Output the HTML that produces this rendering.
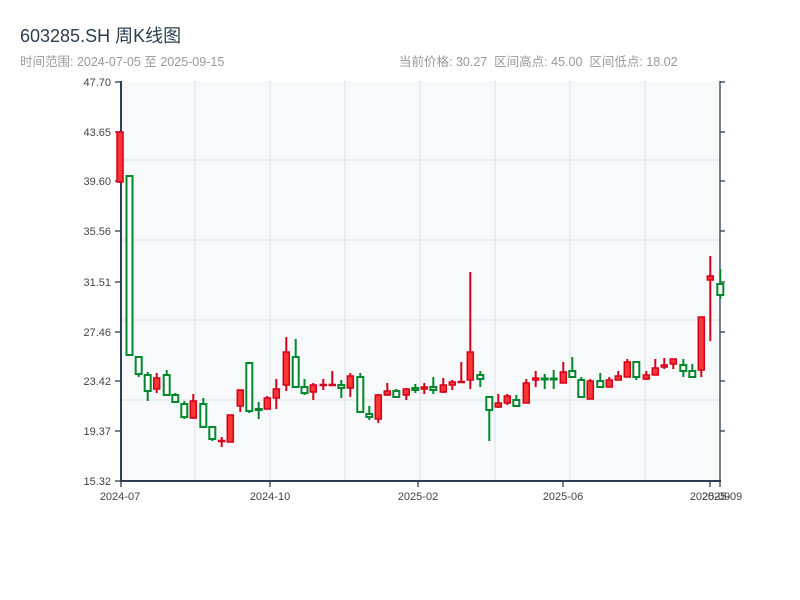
<!DOCTYPE html>
<html><head><meta charset="utf-8"><style>
body{margin:0;width:800px;height:600px;background:#fff;font-family:"Liberation Sans","Noto Sans CJK SC",sans-serif;position:relative;overflow:hidden}
.t{position:absolute;left:20px;top:22px;font-size:18px;color:#2c3e50}
.s{position:absolute;top:51px;font-size:12.5px;color:#999}
svg{position:absolute;left:0;top:0}
.r line{stroke:#d0021b;stroke-width:2}.r rect{fill:#ff3535;stroke:#d0021b;stroke-width:1.5}
.g line{stroke:#00882e;stroke-width:2}.g rect{fill:#fff;stroke:#00882e;stroke-width:2}
</style></head><body>
<div class="t">603285.SH 周K线图</div>
<div class="s" style="left:20px">时间范围: 2024-07-05 至 2025-09-15</div>
<div class="s" style="left:399px">当前价格: 30.27 &nbsp;区间高点: 45.00 &nbsp;区间低点: 18.02</div>
<svg width="800" height="600">
<rect x="121" y="81" width="599" height="400" fill="#f7f9fb"/>
<g stroke="#e2e5ea" stroke-width="1.3">
<line x1="121" y1="160" x2="720" y2="160"/><line x1="121" y1="240" x2="720" y2="240"/><line x1="121" y1="320" x2="720" y2="320"/><line x1="121" y1="400" x2="720" y2="400"/>
<line x1="195" y1="81" x2="195" y2="481"/><line x1="270" y1="81" x2="270" y2="481"/><line x1="345" y1="81" x2="345" y2="481"/><line x1="420" y1="81" x2="420" y2="481"/><line x1="495" y1="81" x2="495" y2="481"/><line x1="570" y1="81" x2="570" y2="481"/><line x1="645" y1="81" x2="645" y2="481"/>
</g>
<g stroke="#2e3e50" stroke-width="1.3">
<line x1="121" y1="81" x2="121" y2="482" stroke-width="2"/><line x1="120" y1="481" x2="721" y2="481" stroke-width="2"/><line x1="720" y1="81" x2="720" y2="482"/>
<line x1="115" y1="82" x2="121" y2="82"/><line x1="115" y1="132" x2="121" y2="132"/><line x1="115" y1="181" x2="121" y2="181"/><line x1="115" y1="231" x2="121" y2="231"/><line x1="115" y1="282" x2="121" y2="282"/><line x1="115" y1="332" x2="121" y2="332"/><line x1="115" y1="381" x2="121" y2="381"/><line x1="115" y1="431" x2="121" y2="431"/><line x1="115" y1="481" x2="121" y2="481"/>
<line x1="720" y1="82" x2="725" y2="82"/><line x1="720" y1="132" x2="725" y2="132"/><line x1="720" y1="181" x2="725" y2="181"/><line x1="720" y1="231" x2="725" y2="231"/><line x1="720" y1="282" x2="725" y2="282"/><line x1="720" y1="332" x2="725" y2="332"/><line x1="720" y1="381" x2="725" y2="381"/><line x1="720" y1="431" x2="725" y2="431"/>
<line x1="121" y1="481" x2="121" y2="487"/><line x1="270" y1="481" x2="270" y2="487"/><line x1="418" y1="481" x2="418" y2="487"/><line x1="563" y1="481" x2="563" y2="487"/><line x1="710" y1="481" x2="710" y2="487"/><line x1="720" y1="481" x2="720" y2="487"/>
</g>
<g font-size="11" fill="#444" text-anchor="end" font-family="Liberation Sans,sans-serif">
<text x="111" y="86">47.70</text><text x="111" y="136">43.65</text><text x="111" y="185">39.60</text><text x="111" y="235">35.56</text><text x="111" y="286">31.51</text><text x="111" y="336">27.46</text><text x="111" y="385">23.42</text><text x="111" y="435">19.37</text><text x="111" y="485">15.32</text>
</g>
<g font-size="11" fill="#444" text-anchor="middle" font-family="Liberation Sans,sans-serif">
<text x="120" y="500">2024-07</text><text x="270" y="500">2024-10</text><text x="418" y="500">2025-02</text><text x="563" y="500">2025-06</text><text x="710" y="500">2025-09</text><text x="722" y="500">2025-09</text>
</g>
<g class="r"><line x1="120" y1="131" x2="120" y2="183"/><rect x="117" y="132" width="6" height="50"/></g>
<g class="g"><line x1="129.5" y1="176" x2="129.5" y2="356"/><rect x="126.5" y="176" width="6" height="179"/></g>
<g class="g"><line x1="138.7" y1="357" x2="138.7" y2="377"/><rect x="135.7" y="357" width="6" height="17"/></g>
<g class="g"><line x1="147.7" y1="372" x2="147.7" y2="401"/><rect x="144.7" y="375" width="6" height="16"/></g>
<g class="r"><line x1="156.7" y1="373" x2="156.7" y2="393"/><rect x="153.7" y="378" width="6" height="11"/></g>
<g class="g"><line x1="166.7" y1="370" x2="166.7" y2="395"/><rect x="163.7" y="375" width="6" height="20"/></g>
<g class="g"><line x1="175.3" y1="393" x2="175.3" y2="402"/><rect x="172.3" y="395" width="6" height="7"/></g>
<g class="g"><line x1="184.3" y1="401" x2="184.3" y2="419"/><rect x="181.3" y="404" width="6" height="13"/></g>
<g class="r"><line x1="193.3" y1="394" x2="193.3" y2="419"/><rect x="190.3" y="401" width="6" height="17"/></g>
<g class="g"><line x1="203.3" y1="398" x2="203.3" y2="427"/><rect x="200.3" y="404" width="6" height="23"/></g>
<g class="g"><line x1="212.3" y1="426" x2="212.3" y2="441"/><rect x="209.3" y="427" width="6" height="12"/></g>
<g class="r"><line x1="221.7" y1="437" x2="221.7" y2="447"/><rect x="218.7" y="440.5" width="6" height="1"/></g>
<g class="r"><line x1="230.3" y1="415" x2="230.3" y2="442"/><rect x="227.3" y="415" width="6" height="27"/></g>
<g class="r"><line x1="240.3" y1="390" x2="240.3" y2="412"/><rect x="237.3" y="390" width="6" height="16"/></g>
<g class="g"><line x1="249.3" y1="363" x2="249.3" y2="413"/><rect x="246.3" y="363" width="6" height="48"/></g>
<g class="g"><line x1="258.7" y1="402" x2="258.7" y2="419"/><rect x="255.7" y="409" width="6" height="1"/></g>
<g class="r"><line x1="267.3" y1="396" x2="267.3" y2="409"/><rect x="264.3" y="398" width="6" height="11"/></g>
<g class="r"><line x1="276.3" y1="379" x2="276.3" y2="409"/><rect x="273.3" y="389" width="6" height="9"/></g>
<g class="r"><line x1="286.3" y1="337" x2="286.3" y2="391"/><rect x="283.3" y="352" width="6" height="33"/></g>
<g class="g"><line x1="295.7" y1="339" x2="295.7" y2="387"/><rect x="292.7" y="357" width="6" height="30"/></g>
<g class="g"><line x1="304.5" y1="379" x2="304.5" y2="395"/><rect x="301.5" y="387" width="6" height="6"/></g>
<g class="r"><line x1="313.3" y1="383" x2="313.3" y2="400"/><rect x="310.3" y="385" width="6" height="7"/></g>
<g class="r"><line x1="323.3" y1="379" x2="323.3" y2="390"/><rect x="320.3" y="384.5" width="6" height="1"/></g>
<g class="r"><line x1="332.3" y1="371" x2="332.3" y2="385"/><rect x="329.3" y="384.5" width="6" height="1"/></g>
<g class="g"><line x1="341.3" y1="380" x2="341.3" y2="398"/><rect x="338.3" y="385" width="6" height="3"/></g>
<g class="r"><line x1="350.3" y1="373" x2="350.3" y2="397"/><rect x="347.3" y="376" width="6" height="12"/></g>
<g class="g"><line x1="360.3" y1="373" x2="360.3" y2="413"/><rect x="357.3" y="377" width="6" height="35"/></g>
<g class="g"><line x1="369.3" y1="406" x2="369.3" y2="420"/><rect x="366.3" y="414" width="6" height="3"/></g>
<g class="r"><line x1="378.3" y1="394" x2="378.3" y2="423"/><rect x="375.3" y="395" width="6" height="24"/></g>
<g class="r"><line x1="387.3" y1="383" x2="387.3" y2="396"/><rect x="384.3" y="391" width="6" height="4"/></g>
<g class="g"><line x1="396.3" y1="389" x2="396.3" y2="397"/><rect x="393.3" y="391" width="6" height="6"/></g>
<g class="r"><line x1="406.3" y1="388" x2="406.3" y2="400"/><rect x="403.3" y="389" width="6" height="6"/></g>
<g class="g"><line x1="415.3" y1="384" x2="415.3" y2="393"/><rect x="412.3" y="388" width="6" height="2"/></g>
<g class="r"><line x1="424.3" y1="383" x2="424.3" y2="394"/><rect x="421.3" y="387" width="6" height="2"/></g>
<g class="g"><line x1="433.3" y1="377" x2="433.3" y2="394"/><rect x="430.3" y="387" width="6" height="3"/></g>
<g class="r"><line x1="443.3" y1="378" x2="443.3" y2="393"/><rect x="440.3" y="385" width="6" height="7"/></g>
<g class="r"><line x1="452.3" y1="380" x2="452.3" y2="390"/><rect x="449.3" y="382" width="6" height="3"/></g>
<g class="r"><line x1="461.3" y1="362" x2="461.3" y2="382"/><rect x="458.3" y="381.5" width="6" height="1"/></g>
<g class="r"><line x1="470.3" y1="272" x2="470.3" y2="389"/><rect x="467.3" y="352" width="6" height="28"/></g>
<g class="g"><line x1="480.3" y1="371" x2="480.3" y2="387"/><rect x="477.3" y="375" width="6" height="4"/></g>
<g class="g"><line x1="489.3" y1="397" x2="489.3" y2="441"/><rect x="486.3" y="397" width="6" height="13"/></g>
<g class="r"><line x1="498.3" y1="394" x2="498.3" y2="408"/><rect x="495.3" y="403" width="6" height="4"/></g>
<g class="r"><line x1="507.3" y1="394" x2="507.3" y2="405"/><rect x="504.3" y="396" width="6" height="7"/></g>
<g class="g"><line x1="516.3" y1="395" x2="516.3" y2="407"/><rect x="513.3" y="400" width="6" height="6"/></g>
<g class="r"><line x1="526.3" y1="379" x2="526.3" y2="403"/><rect x="523.3" y="383" width="6" height="20"/></g>
<g class="r"><line x1="535.7" y1="371" x2="535.7" y2="387"/><rect x="532.7" y="378" width="6" height="2"/></g>
<g class="g"><line x1="544.7" y1="374" x2="544.7" y2="389"/><rect x="541.7" y="378.5" width="6" height="1"/></g>
<g class="g"><line x1="553.7" y1="370" x2="553.7" y2="389"/><rect x="550.7" y="378.5" width="6" height="1"/></g>
<g class="r"><line x1="563.3" y1="362" x2="563.3" y2="383"/><rect x="560.3" y="372" width="6" height="11"/></g>
<g class="g"><line x1="572.3" y1="357" x2="572.3" y2="377"/><rect x="569.3" y="371" width="6" height="6"/></g>
<g class="g"><line x1="581.3" y1="377" x2="581.3" y2="397"/><rect x="578.3" y="380" width="6" height="17"/></g>
<g class="r"><line x1="590.3" y1="379" x2="590.3" y2="399"/><rect x="587.3" y="381" width="6" height="18"/></g>
<g class="g"><line x1="600.3" y1="373" x2="600.3" y2="387"/><rect x="597.3" y="381" width="6" height="6"/></g>
<g class="r"><line x1="609.3" y1="377" x2="609.3" y2="387"/><rect x="606.3" y="380" width="6" height="7"/></g>
<g class="r"><line x1="618.3" y1="371" x2="618.3" y2="380"/><rect x="615.3" y="376" width="6" height="4"/></g>
<g class="r"><line x1="627.3" y1="359" x2="627.3" y2="377"/><rect x="624.3" y="362" width="6" height="15"/></g>
<g class="g"><line x1="636.3" y1="362" x2="636.3" y2="380"/><rect x="633.3" y="362" width="6" height="15"/></g>
<g class="r"><line x1="646.3" y1="371" x2="646.3" y2="380"/><rect x="643.3" y="375" width="6" height="4"/></g>
<g class="r"><line x1="655.3" y1="359" x2="655.3" y2="375"/><rect x="652.3" y="368" width="6" height="7"/></g>
<g class="r"><line x1="664.3" y1="358" x2="664.3" y2="369"/><rect x="661.3" y="365" width="6" height="2"/></g>
<g class="r"><line x1="673.3" y1="359" x2="673.3" y2="369"/><rect x="670.3" y="359" width="6" height="5"/></g>
<g class="g"><line x1="683.3" y1="359" x2="683.3" y2="377"/><rect x="680.3" y="365" width="6" height="6"/></g>
<g class="g"><line x1="692.3" y1="364" x2="692.3" y2="377"/><rect x="689.3" y="371" width="6" height="6"/></g>
<g class="r"><line x1="701.3" y1="317" x2="701.3" y2="377"/><rect x="698.3" y="317" width="6" height="53"/></g>
<g class="r"><line x1="710.3" y1="256" x2="710.3" y2="341"/><rect x="707.3" y="276" width="6" height="4"/></g>
<g class="g"><line x1="720.3" y1="269" x2="720.3" y2="299"/><rect x="717.3" y="284" width="6" height="11"/></g>
</svg>
</body></html>
